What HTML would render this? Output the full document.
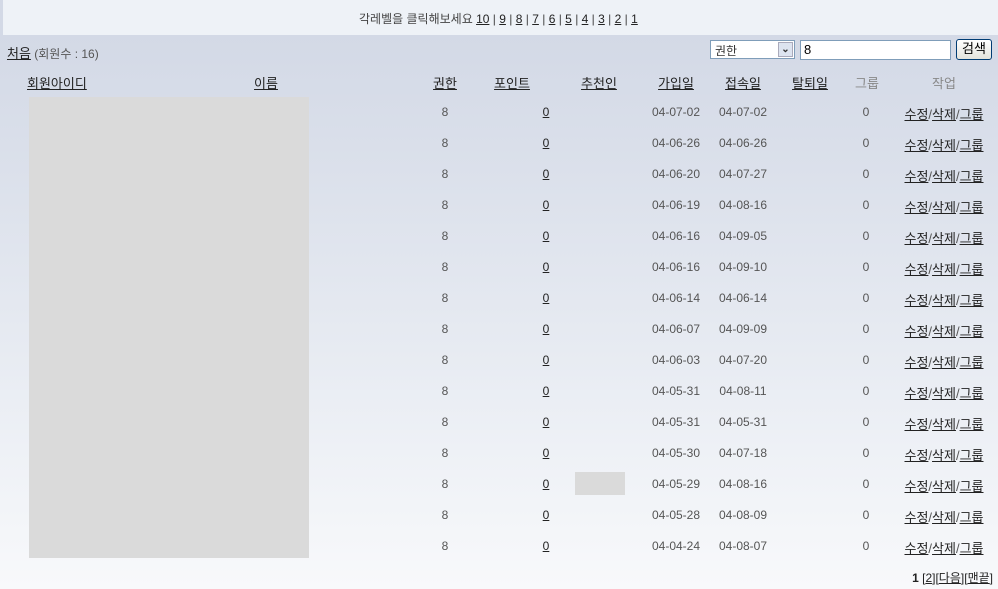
<!DOCTYPE html>
<html><head><meta charset="utf-8"><style>
html,body{margin:0;padding:0}
body{width:998px;height:589px;position:relative;overflow:hidden;font-family:"Liberation Sans","Noto Sans CJK KR","NanumGothic",sans-serif;font-size:12px;color:#555;background:linear-gradient(#d3d9e6 35px,#dde2ec 200px,#eef1f6 450px,#f8f9fb 589px)}
#top{position:absolute;left:0;top:0;width:998px;height:35px;background:#eef2f7;border-left:3px solid #d3d9e6;box-sizing:border-box}
.a{position:absolute;white-space:nowrap}
a,u{color:#222;text-decoration:underline}
.c{position:absolute;transform:translateX(-50%);white-space:nowrap}
.r{position:absolute;width:998px;left:0;height:20px}
.w{font-size:13px;top:-1px}
</style></head><body>
<div id="top"></div>
<div class="a" style="left:359px;top:10px;color:#444">각레벨을 클릭해보세요 <u>10</u> | <u>9</u> | <u>8</u> | <u>7</u> | <u>6</u> | <u>5</u> | <u>4</u> | <u>3</u> | <u>2</u> | <u>1</u></div>
<div class="a" style="left:7px;top:43px"><u style="font-size:13px">처음</u> (회원수 : 16)</div>
<div class="a" style="left:710px;top:40px;width:85px;height:19px;border:1px solid #7f9db9;background:#fff;box-sizing:border-box;padding:1px 4px;color:#333">권한<span style="position:absolute;right:1px;top:1px;width:15px;height:15px;background:#dde4f0;border:1px solid #aab;box-sizing:border-box;font-size:10px;text-align:center;line-height:13px;font-weight:bold;color:#333">&#8964;</span></div>
<div class="a" style="left:800px;top:40px;width:151px;height:20px;border:1px solid #7f9db9;background:#fff;box-sizing:border-box;padding:1px 3px;color:#000;font-size:13px">8</div>
<div class="a" style="left:956px;top:39px;width:36px;height:21px;border:1px solid #003c74;border-radius:3px;background:linear-gradient(#fff,#e3e3dc);box-sizing:border-box;text-align:center;line-height:18px;color:#000;font-size:13px">검색</div>
<div class="a" style="left:27px;top:73px"><u style="font-size:13px">회원아이디</u></div>
<div class="c" style="left:266px;top:73px"><u style="font-size:13px">이름</u></div>
<div class="c" style="left:445px;top:73px"><u style="font-size:13px">권한</u></div>
<div class="c" style="left:512px;top:73px"><u style="font-size:13px">포인트</u></div>
<div class="c" style="left:599px;top:73px"><u style="font-size:13px">추천인</u></div>
<div class="c" style="left:676px;top:73px"><u style="font-size:13px">가입일</u></div>
<div class="c" style="left:743px;top:73px"><u style="font-size:13px">접속일</u></div>
<div class="c" style="left:810px;top:73px"><u style="font-size:13px">탈퇴일</u></div>
<div class="c" style="left:867px;top:73px;color:#888;font-size:13px">그룹</div>
<div class="c" style="left:944px;top:73px;color:#888;font-size:13px">작업</div>
<div class="a" style="left:29px;top:97px;width:280px;height:461px;background:#dadada"></div>
<div class="a" style="left:575px;top:472px;width:50px;height:23px;background:#dadada"></div>

<div class="r" style="top:105px"><span class="c" style="left:445px">8</span><span class="c" style="left:546px"><u>0</u></span><span class="c" style="left:676px">04-07-02</span><span class="c" style="left:743px">04-07-02</span><span class="c" style="left:866px">0</span><span class="c w" style="left:944px"><u>수정</u>/<u>삭제</u>/<u>그룹</u></span></div>
<div class="r" style="top:136px"><span class="c" style="left:445px">8</span><span class="c" style="left:546px"><u>0</u></span><span class="c" style="left:676px">04-06-26</span><span class="c" style="left:743px">04-06-26</span><span class="c" style="left:866px">0</span><span class="c w" style="left:944px"><u>수정</u>/<u>삭제</u>/<u>그룹</u></span></div>
<div class="r" style="top:167px"><span class="c" style="left:445px">8</span><span class="c" style="left:546px"><u>0</u></span><span class="c" style="left:676px">04-06-20</span><span class="c" style="left:743px">04-07-27</span><span class="c" style="left:866px">0</span><span class="c w" style="left:944px"><u>수정</u>/<u>삭제</u>/<u>그룹</u></span></div>
<div class="r" style="top:198px"><span class="c" style="left:445px">8</span><span class="c" style="left:546px"><u>0</u></span><span class="c" style="left:676px">04-06-19</span><span class="c" style="left:743px">04-08-16</span><span class="c" style="left:866px">0</span><span class="c w" style="left:944px"><u>수정</u>/<u>삭제</u>/<u>그룹</u></span></div>
<div class="r" style="top:229px"><span class="c" style="left:445px">8</span><span class="c" style="left:546px"><u>0</u></span><span class="c" style="left:676px">04-06-16</span><span class="c" style="left:743px">04-09-05</span><span class="c" style="left:866px">0</span><span class="c w" style="left:944px"><u>수정</u>/<u>삭제</u>/<u>그룹</u></span></div>
<div class="r" style="top:260px"><span class="c" style="left:445px">8</span><span class="c" style="left:546px"><u>0</u></span><span class="c" style="left:676px">04-06-16</span><span class="c" style="left:743px">04-09-10</span><span class="c" style="left:866px">0</span><span class="c w" style="left:944px"><u>수정</u>/<u>삭제</u>/<u>그룹</u></span></div>
<div class="r" style="top:291px"><span class="c" style="left:445px">8</span><span class="c" style="left:546px"><u>0</u></span><span class="c" style="left:676px">04-06-14</span><span class="c" style="left:743px">04-06-14</span><span class="c" style="left:866px">0</span><span class="c w" style="left:944px"><u>수정</u>/<u>삭제</u>/<u>그룹</u></span></div>
<div class="r" style="top:322px"><span class="c" style="left:445px">8</span><span class="c" style="left:546px"><u>0</u></span><span class="c" style="left:676px">04-06-07</span><span class="c" style="left:743px">04-09-09</span><span class="c" style="left:866px">0</span><span class="c w" style="left:944px"><u>수정</u>/<u>삭제</u>/<u>그룹</u></span></div>
<div class="r" style="top:353px"><span class="c" style="left:445px">8</span><span class="c" style="left:546px"><u>0</u></span><span class="c" style="left:676px">04-06-03</span><span class="c" style="left:743px">04-07-20</span><span class="c" style="left:866px">0</span><span class="c w" style="left:944px"><u>수정</u>/<u>삭제</u>/<u>그룹</u></span></div>
<div class="r" style="top:384px"><span class="c" style="left:445px">8</span><span class="c" style="left:546px"><u>0</u></span><span class="c" style="left:676px">04-05-31</span><span class="c" style="left:743px">04-08-11</span><span class="c" style="left:866px">0</span><span class="c w" style="left:944px"><u>수정</u>/<u>삭제</u>/<u>그룹</u></span></div>
<div class="r" style="top:415px"><span class="c" style="left:445px">8</span><span class="c" style="left:546px"><u>0</u></span><span class="c" style="left:676px">04-05-31</span><span class="c" style="left:743px">04-05-31</span><span class="c" style="left:866px">0</span><span class="c w" style="left:944px"><u>수정</u>/<u>삭제</u>/<u>그룹</u></span></div>
<div class="r" style="top:446px"><span class="c" style="left:445px">8</span><span class="c" style="left:546px"><u>0</u></span><span class="c" style="left:676px">04-05-30</span><span class="c" style="left:743px">04-07-18</span><span class="c" style="left:866px">0</span><span class="c w" style="left:944px"><u>수정</u>/<u>삭제</u>/<u>그룹</u></span></div>
<div class="r" style="top:477px"><span class="c" style="left:445px">8</span><span class="c" style="left:546px"><u>0</u></span><span class="c" style="left:676px">04-05-29</span><span class="c" style="left:743px">04-08-16</span><span class="c" style="left:866px">0</span><span class="c w" style="left:944px"><u>수정</u>/<u>삭제</u>/<u>그룹</u></span></div>
<div class="r" style="top:508px"><span class="c" style="left:445px">8</span><span class="c" style="left:546px"><u>0</u></span><span class="c" style="left:676px">04-05-28</span><span class="c" style="left:743px">04-08-09</span><span class="c" style="left:866px">0</span><span class="c w" style="left:944px"><u>수정</u>/<u>삭제</u>/<u>그룹</u></span></div>
<div class="r" style="top:539px"><span class="c" style="left:445px">8</span><span class="c" style="left:546px"><u>0</u></span><span class="c" style="left:676px">04-04-24</span><span class="c" style="left:743px">04-08-07</span><span class="c" style="left:866px">0</span><span class="c w" style="left:944px"><u>수정</u>/<u>삭제</u>/<u>그룹</u></span></div>

<div class="a" style="right:5px;top:569px;color:#222"><b>1</b> [<u>2</u>][<u>다음</u>][<u>맨끝</u>]</div>
</body></html>
